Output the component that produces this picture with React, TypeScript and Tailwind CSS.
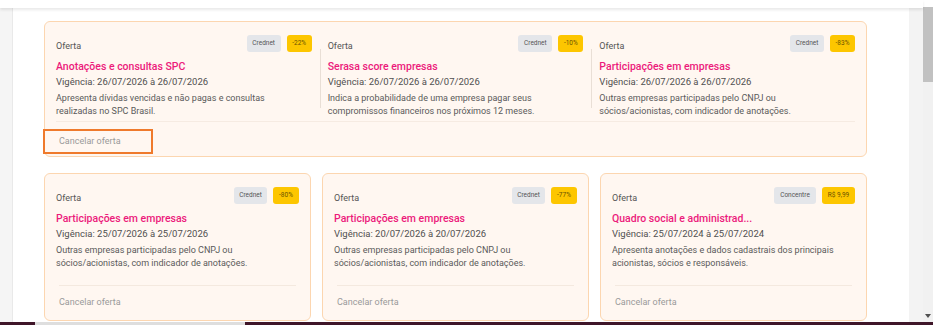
import React from "react";

type Offer = {
  source: string;
  sourceW: string;
  tag: string;
  tagW: string;
  title: string;
  period: string;
  lines: string[];
};

const topOffers: Offer[] = [
  {
    source: "Crednet",
    sourceW: "w-[34px]",
    tag: "-22%",
    tagW: "w-[25px]",
    title: "Anotações e consultas SPC",
    period: "Vigência: 26/07/2026 à 26/07/2026",
    lines: ["Apresenta dívidas vencidas e não pagas e consultas", "realizadas no SPC Brasil."],
  },
  {
    source: "Crednet",
    sourceW: "w-[34px]",
    tag: "-10%",
    tagW: "w-[25px]",
    title: "Serasa score empresas",
    period: "Vigência: 26/07/2026 à 26/07/2026",
    lines: ["Indica a probabilidade de uma empresa pagar seus", "compromissos financeiros nos próximos 12 meses."],
  },
  {
    source: "Crednet",
    sourceW: "w-[34px]",
    tag: "-83%",
    tagW: "w-[25px]",
    title: "Participações em empresas",
    period: "Vigência: 26/07/2026 à 26/07/2026",
    lines: ["Outras empresas participadas pelo CNPJ ou", "sócios/acionistas, com indicador de anotações."],
  },
];

const bottomOffers: Offer[] = [
  {
    source: "Crednet",
    sourceW: "w-[33px]",
    tag: "-80%",
    tagW: "w-[26px]",
    title: "Participações em empresas",
    period: "Vigência: 25/07/2026 à 25/07/2026",
    lines: ["Outras empresas participadas pelo CNPJ ou", "sócios/acionistas, com indicador de anotações."],
  },
  {
    source: "Crednet",
    sourceW: "w-[33px]",
    tag: "-77%",
    tagW: "w-[26px]",
    title: "Participações em empresas",
    period: "Vigência: 20/07/2026 à 20/07/2026",
    lines: ["Outras empresas participadas pelo CNPJ ou", "sócios/acionistas, com indicador de anotações."],
  },
  {
    source: "Concentre",
    sourceW: "w-[42px]",
    tag: "R$ 9,99",
    tagW: "w-[33px]",
    title: "Quadro social e administrad...",
    period: "Vigência: 25/07/2024 à 25/07/2024",
    lines: ["Apresenta anotações e dados cadastrais dos principais", "acionistas, sócios e responsáveis."],
  },
];

const OfferBody = ({ offer }: { offer: Offer }) => (
  <div className="flex flex-col">
    <div className="flex h-[17px] justify-between">
      <span className="mt-[5px] text-[9px] leading-[12px] text-[#555]">Oferta</span>
      <div className="flex gap-[6px]">
        <span
          className={`${offer.sourceW} flex h-[17px] items-center justify-center rounded-[3px] bg-[#e4e6ea] text-[6.5px] text-[#555]`}
        >
          {offer.source}
        </span>
        <span
          className={`${offer.tagW} flex h-[17px] items-center justify-center rounded-[3px] bg-[#fdc600] text-[6.5px] text-[#6b5300]`}
        >
          {offer.tag}
        </span>
      </div>
    </div>
    <h3 className="mt-[8px] whitespace-nowrap text-[10.5px] font-medium leading-[14px] text-[#ec1a7b]">
      {offer.title}
    </h3>
    <p className="mt-[1px] whitespace-nowrap text-[9.5px] leading-[14px] text-[#505050]">{offer.period}</p>
    <p className="mt-[3px] text-[9px] leading-[13px] text-[#5a5a5a]">
      {offer.lines.map((l) => (
        <span key={l} className="block whitespace-nowrap">
          {l}
        </span>
      ))}
    </p>
  </div>
);

const App = () => {
  return (
    <div className="relative h-[331px] w-[939px] overflow-hidden bg-white font-['Roboto',sans-serif]">
      <div className="flex h-[322px]">
        <div className="flex w-[923px] flex-col">
          <div className="relative z-10 h-[8px] bg-white shadow-[0_2px_3px_rgba(0,0,0,0.09)]" />
          <div className="flex flex-1 overflow-hidden">
            <div className="w-[13px] border-r border-[#e9e9e9] bg-[#f5f5f5]" />
            <main className="flex w-[896px] flex-col gap-[16px] bg-white pl-[31px] pt-[13px]">
              {/* featured offers */}
              <section className="w-[823px] rounded-[6px] border border-[#fcd6b0] bg-[#fff7f1] px-[11px] pt-[13px] pb-[2px]">
                <div className="flex h-[86px]">
                  <div className="w-[256px]">
                    <OfferBody offer={topOffers[0]} />
                  </div>
                  <div className="ml-[8px] mr-[7px] mt-[14px] h-[59px] w-px bg-[#e9dfd6]" />
                  <div className="w-[256px]">
                    <OfferBody offer={topOffers[1]} />
                  </div>
                  <div className="ml-[8px] mr-[7px] mt-[14px] h-[59px] w-px bg-[#e9dfd6]" />
                  <div className="w-[256px]">
                    <OfferBody offer={topOffers[2]} />
                  </div>
                </div>
                <div className="border-t border-[#f6ebe2]" />
                <button className="-ml-[13px] mt-[7px] flex h-[25px] w-[110px] items-center border-2 border-[#ef7a2c] pl-[14px] text-[9px] text-[#9a9a9a]">
                  Cancelar oferta
                </button>
              </section>

              <section className="flex gap-[11px]">
                {bottomOffers.map((o, i) => (
                  <div
                    key={i}
                    className="w-[267px] rounded-[6px] border border-[#fcd6b0] bg-[#fff7f1] px-[11px] pt-[13px]"
                  >
                    <div className="h-[98px]">
                      <OfferBody offer={o} />
                    </div>
                    <div className="mx-[3px] border-t border-[#f4e9df]" />
                    <div className="flex h-[34px] items-center pl-[3px] text-[9px] text-[#9a9a9a]">
                      Cancelar oferta
                    </div>
                  </div>
                ))}
              </section>
            </main>
            <div className="w-[14px] bg-[#f3f3f3]" />
          </div>
        </div>
        {/* scrollbar */}
        <div className="mt-[7px] flex w-[10px] flex-col bg-[#f1f1f1]">
          <div className="h-[75px] bg-[#c1c1c1]" />
          <div className="flex-1" />
          <div className="mb-[4px] flex justify-center">
            <svg width="6" height="4" viewBox="0 0 6 4">
              <path d="M0 0h6L3 4z" fill="#505050" />
            </svg>
          </div>
        </div>
        <div className="w-[6px]" />
      </div>
      <div className="flex h-[3px] w-[933px]">
        <div className="w-[35px] bg-[#3f1629]" />
        <div className="w-[210px] bg-[#dedede]" />
        <div className="flex-1 bg-[#3f1629]" />
      </div>
    </div>
  );
};

export default App;
